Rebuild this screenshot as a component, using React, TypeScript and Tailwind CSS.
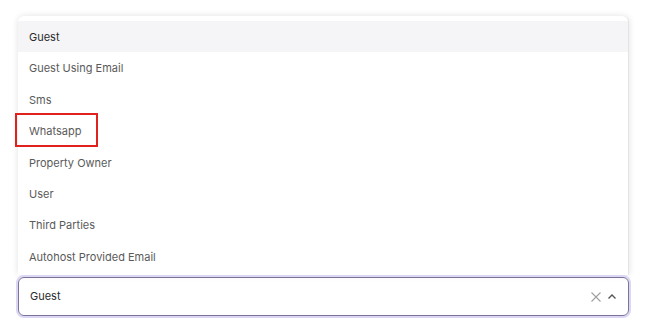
import React from "react";

const items = [
  "Guest",
  "Guest Using Email",
  "Sms",
  "Whatsapp",
  "Property Owner",
  "User",
  "Third Parties",
  "Autohost Provided Email",
];

export default function App() {
  return (
    <div
      className="w-[670px] h-[334px] bg-white relative"
      style={{ fontFamily: "Inter, 'Noto Sans', sans-serif" }}
    >
      <div className="pl-[18px] pt-[16px] w-[629px]">
        <div className="rounded-t-[6px] bg-white shadow-[0_0_6px_rgba(0,0,0,0.12)] pt-[5px] pb-[3px] border-r border-[#e4e4e4]">
          {items.map((it, i) => (
            <div
              key={it}
              className={
                "h-[31.4px] flex items-center pl-[11px] pt-[1px] text-[11px] " +
                (i === 0 ? "bg-[#f5f5f7] text-[#2b2b2b]" : "text-[#5a5a5a]")
              }
            >
              {it === "Whatsapp" ? (
                <span className="relative">
                  {it}
                  <span className="absolute left-[-14px] top-[-10px] w-[83px] h-[34px] border-2 border-[#e0211d]" />
                </span>
              ) : (
                it
              )}
            </div>
          ))}
        </div>
        <div className="mt-[2px] h-[39px] rounded-[6px] border border-[#7d7399] ring-2 ring-[#dcd6f5] flex items-center pl-[11px] pr-[10px] text-[11px] text-[#2b2b2b]">
          <span className="flex-1">Guest</span>
          <svg width="12" height="12" viewBox="0 0 12 12" className="mr-[4px]">
            <path d="M1.5 1.5 L10.5 10.5 M10.5 1.5 L1.5 10.5" stroke="#a0a0a0" strokeWidth="1.1" fill="none" />
          </svg>
          <svg width="12" height="12" viewBox="0 0 12 12">
            <path d="M2.5 7.5 L6 4 L9.5 7.5" stroke="#555" strokeWidth="1.4" fill="none" />
          </svg>
        </div>
      </div>
    </div>
  );
}
